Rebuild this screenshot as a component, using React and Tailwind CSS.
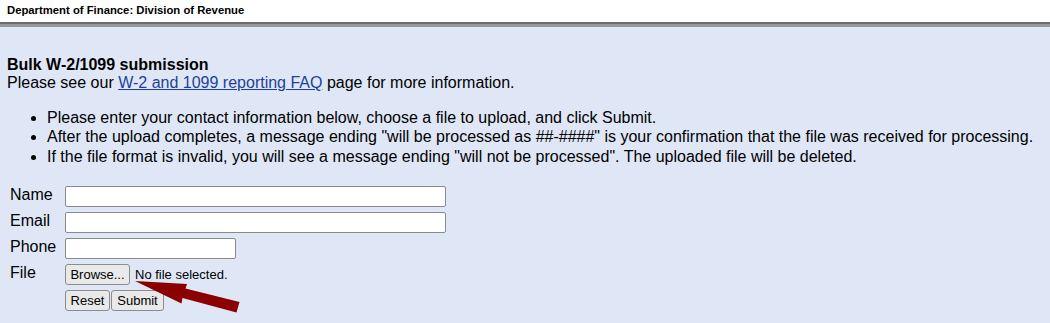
import React from "react";

const font = { fontFamily: '"Liberation Sans", Arial, sans-serif' };

function Btn({ children, className = "" }) {
  return (
    <button
      type="button"
      className={`block h-[21px] rounded-[3px] border border-[#8c8c8c] bg-[#e9e9e9] text-[13px] leading-[15px] text-black ${className}`}
    >
      {children}
    </button>
  );
}

export default function App() {
  return (
    <div className="relative h-[323px] w-[1050px] overflow-hidden bg-[#dfe7f7] text-black" style={font}>
      <div className="h-[22px] bg-white pl-[7px] pt-[4px] text-[11.3px] font-bold leading-[13px]">
        Department of Finance: Division of Revenue
      </div>
      <div className="h-[1.5px] bg-[#6c6c6c]" />
      <div className="h-[3.5px] bg-[#979797]" />
      <div className="px-[7px] pt-[29px]">
        <div className="text-[16px] font-bold leading-[18.3px]">Bulk W-2/1099 submission</div>
        <div className="text-[16px] leading-[18.3px]">
          Please see our{" "}
          <a href="#" className="text-[#1d3f9e] underline">
            W-2 and 1099 reporting FAQ
          </a>{" "}
          page for more information.
        </div>
        <ul className="mt-[15px] list-disc pl-[40px] text-[16px] leading-[19.6px]">
          <li>Please enter your contact information below, choose a file to upload, and click Submit.</li>
          <li>
            After the upload completes, a message ending "will be processed as ##-####" is your confirmation that the file was received for processing.
          </li>
          <li>If the file format is invalid, you will see a message ending "will not be processed". The uploaded file will be deleted.</li>
        </ul>
        <div className="mt-[20px] ml-[3px] grid grid-cols-[55px_auto] gap-y-[5px] text-[16px]">
          <div className="h-[21px] leading-[18px]">Name</div>
          <div className="h-[21px]">
            <input className="block h-[21px] w-[381px] rounded-[2px] border border-[#8a8a8a] bg-white" />
          </div>
          <div className="h-[21px] leading-[18px]">Email</div>
          <div className="h-[21px]">
            <input className="block h-[21px] w-[381px] rounded-[2px] border border-[#8a8a8a] bg-white" />
          </div>
          <div className="h-[21px] leading-[18px]">Phone</div>
          <div className="h-[21px]">
            <input className="block h-[21px] w-[171px] rounded-[2px] border border-[#8a8a8a] bg-white" />
          </div>
          <div className="h-[21px] leading-[18px]">File</div>
          <div className="flex h-[21px] items-center gap-[5px]">
            <Btn className="w-[65px]">Browse...</Btn>
            <span className="text-[13px] leading-[15px]">No file selected.</span>
          </div>
          <div />
          <div className="flex h-[21px] gap-[1px]">
            <Btn className="w-[45px]">Reset</Btn>
            <Btn className="w-[53px]">Submit</Btn>
          </div>
        </div>
      </div>
      <svg className="pointer-events-none absolute left-0 top-0" width="1050" height="323">
        <polygon
          points="135,281 187,284 185.5,288.5 239.5,302 236.5,312.5 182.5,298 181.5,303.5"
          fill="#8b0000"
        />
      </svg>
    </div>
  );
}
